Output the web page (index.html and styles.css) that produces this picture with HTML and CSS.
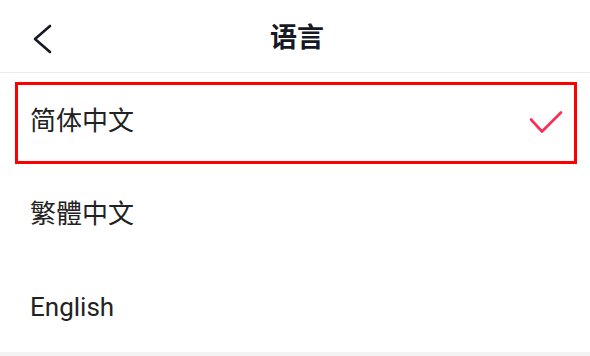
FILE: index.html
```html
<!DOCTYPE html>
<html lang="zh">
<head>
<meta charset="utf-8">
<title>语言</title>
<link rel="stylesheet" href="styles.css">
</head>
<body>
<div class="app">
  <header class="nav">
    <button class="back" aria-label="返回">
      <svg width="24" height="36" viewBox="0 0 24 36"><path d="M20 8 L5 21 L20 34" fill="none" stroke="#161823" stroke-width="2.6" stroke-linecap="round" stroke-linejoin="round"/></svg>
    </button>
    <h1 class="title">语言</h1>
    <span class="spacer"></span>
  </header>
  <ul class="list">
    <li class="item selected">
      <span class="label">简体中文</span>
      <svg class="check" width="36" height="28" viewBox="0 0 36 28"><path d="M3 13.5 L14 25.5 L33 6.5" fill="none" stroke="#fe2c55" stroke-width="2.6" stroke-linecap="round" stroke-linejoin="round"/></svg>
      <span class="highlight"></span>
    </li>
    <li class="item"><span class="label">繁體中文</span></li>
    <li class="item"><span class="label">English</span></li>
  </ul>
</div>
</body>
</html>
```
FILE: styles.css
```css
html, body {
  margin: 0;
  padding: 0;
}
body {
  background: #f3f3f3;
  font-family: Roboto, "Noto Sans CJK SC", "Noto Sans", sans-serif;
  color: #222222;
}
.app {
  background: #ffffff;
  width: 590px;
}
.nav {
  height: 72px;
  border-bottom: 1px solid #ececec;
  display: grid;
  grid-template-columns: 1fr auto 1fr;
  align-items: center;
}
.back {
  justify-self: start;
  background: none;
  border: 0;
  padding: 0 0 0 30px;
  display: flex;
  align-items: center;
  cursor: pointer;
}
.title {
  margin: 0 0 0 4px;
  font-family: "Noto Sans CJK SC", sans-serif;
  font-size: 27px;
  font-weight: 700;
  color: #161823;
  line-height: 30px;
}
.list {
  list-style: none;
  margin: 0;
  padding: 0;
}
.item {
  position: relative;
  height: 93px;
  display: flex;
  align-items: center;
  justify-content: space-between;
  padding: 0 26px 0 30px;
}
.label {
  font-size: 26px;
  line-height: 30px;
  margin-top: 2px;
}
.highlight {
  position: absolute;
  left: 15px;
  right: 13px;
  top: 9px;
  height: 82px;
  box-sizing: border-box;
  border: 3px solid #ff0000;
  pointer-events: none;
}
```
